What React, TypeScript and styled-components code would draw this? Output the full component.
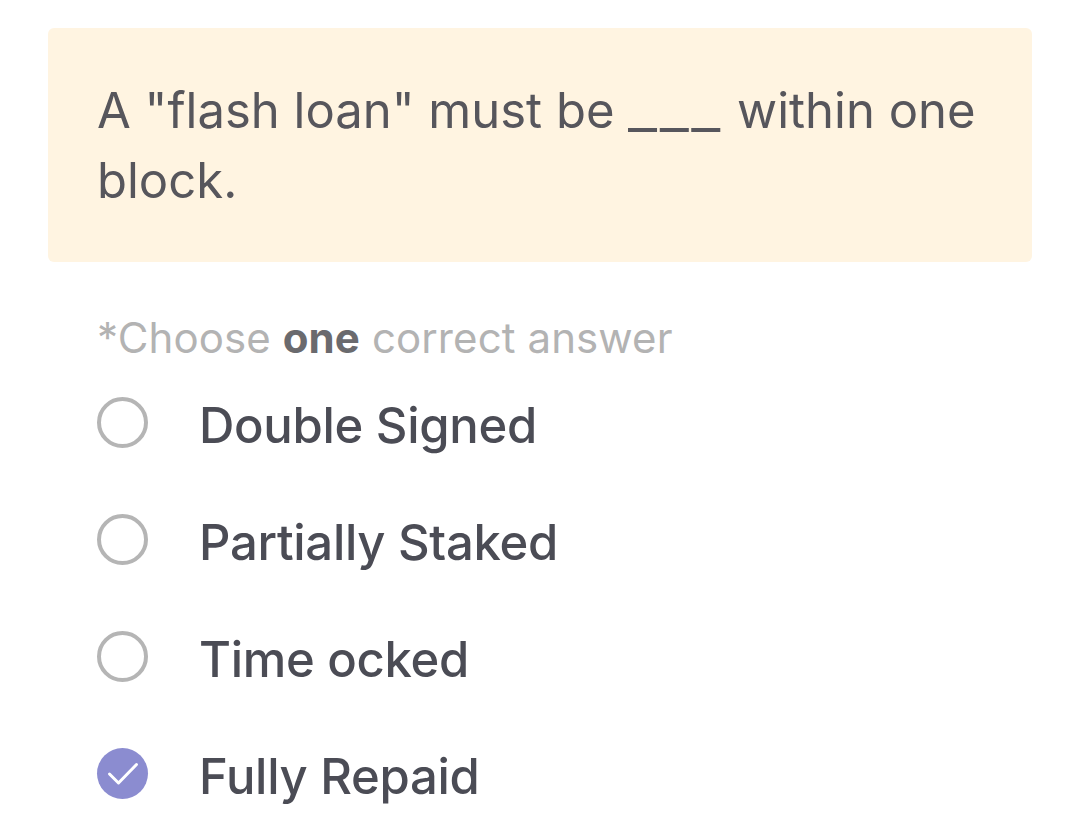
import React from "react";
import styled, { createGlobalStyle } from "styled-components";

const Global = createGlobalStyle`
  html, body { margin: 0; padding: 0; background: #ffffff; }
  body { font-family: Inter, "Noto Sans", sans-serif; }
`;

const Page = styled.div`
  padding: 28px 48px 0 48px;
  display: flex;
  flex-direction: column;
`;

const QuestionCard = styled.div`
  background: #fff4e1;
  border-radius: 6px;
  padding: 48px 49px 40px 49px;
  min-height: 234px;
  box-sizing: border-box;
`;

const QuestionText = styled.p`
  margin: 0;
  font-size: 49px;
  line-height: 70px;
  font-weight: 400;
  color: #57565c;
`;

const Blank = styled.span`
  display: inline-block;
  letter-spacing: 2px;
  transform: scaleX(1.3);
  transform-origin: left center;
  margin-right: 22px;
`;

const Hint = styled.p`
  margin: 51px 0 0 49px;
  font-size: 42px;
  line-height: 50px;
  color: #b3b3b3;
  font-weight: 400;
  letter-spacing: 0.1px;
  b { color: #6a6a6e; font-weight: 700; }
`;

const Options = styled.div`
  display: flex;
  flex-direction: column;
  margin: 1px 0 0 49px;
`;

const Option = styled.label`
  display: flex;
  align-items: center;
  height: 117px;
  gap: 51px;
  cursor: pointer;
`;

const Radio = styled.span<{ $checked?: boolean }>`
  width: 51px;
  height: 51px;
  box-sizing: border-box;
  border-radius: 50%;
  flex: none;
  display: flex;
  border: ${(p) => (p.$checked ? "none" : "4px solid #b5b5b5")};
  background: ${(p) => (p.$checked ? "#8b8cd0" : "transparent")};
`;

const OptionText = styled.span`
  font-size: 49px;
  font-weight: 500;
  color: #4b4c55;
  letter-spacing: -0.3px;
  padding-top: 5px;
`;

const options = [
  { text: "Double Signed", checked: false },
  { text: "Partially Staked", checked: false },
  { text: "Time ocked", checked: false },
  { text: "Fully Repaid", checked: true },
];

export default function App() {
  return (
    <>
      <Global />
      <Page>
        <QuestionCard>
          <QuestionText>
            A "flash loan" must be <Blank>___</Blank> within one block.
          </QuestionText>
        </QuestionCard>
        <Hint>
          *Choose <b>one</b> correct answer
        </Hint>
        <Options>
          {options.map((o) => (
            <Option key={o.text}>
              <Radio $checked={o.checked}>
                {o.checked && (
                  <svg width="51" height="51" viewBox="0 0 51 51" fill="none">
                    <path d="M12.5 26 L21.5 35 L39.5 16.5" stroke="#ffffff" strokeWidth="3" strokeLinecap="round" strokeLinejoin="round" />
                  </svg>
                )}
              </Radio>
              <OptionText>{o.text}</OptionText>
            </Option>
          ))}
        </Options>
      </Page>
    </>
  );
}
